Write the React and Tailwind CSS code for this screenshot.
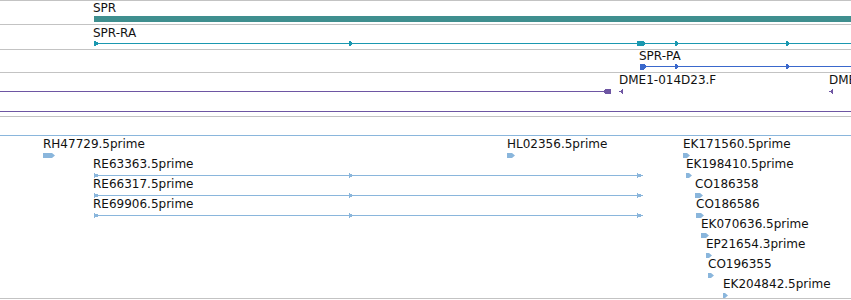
import React from "react";

const TEAL_BAR = "#3f8f8f";
const TEAL = "#1b98b0";
const BLUE = "#3a68cc";
const PURPLE = "#6e56a3";
const EST = "#8ab6dc";

// pointed block from x1 to x2, point on the dir side
function Block({ x1, x2, y = 0, h = 5, dir = "right", color }) {
  const b = y + h;
  const cy = y + h / 2;
  const p = Math.min(3, x2 - x1);
  const pts =
    dir === "right"
      ? `${x1},${y} ${x2 - p},${y} ${x2},${cy} ${x2 - p},${b} ${x1},${b}`
      : `${x2},${y} ${x1 + p},${y} ${x1},${cy} ${x1 + p},${b} ${x2},${b}`;
  return <polygon points={pts} fill={color} />;
}

function Tri({ x, y = 0, h = 6, w = 5, dir = "right", color }) {
  const cy = y + h / 2;
  const pts =
    dir === "right"
      ? `${x},${y} ${x + w},${cy} ${x},${y + h}`
      : `${x + w},${y} ${x},${cy} ${x + w},${y + h}`;
  return <polygon points={pts} fill={color} />;
}

function Line({ x1 = 0, x2 = 851, y, color }) {
  return <rect x={x1} y={y} width={x2 - x1} height={1} fill={color} />;
}

// a name placed at its genomic x on the track canvas
function Name({ x, children }) {
  return (
    <span
      className="absolute top-0 whitespace-nowrap text-[12px] leading-[12px] text-[#111]"
      style={{ left: x }}
    >
      {children}
    </span>
  );
}

const estRows = [
  [
    { name: "RH47729.5prime", x: 43, end: 55 },
    { name: "HL02356.5prime", x: 507, end: 515 },
    { name: "EK171560.5prime", x: 683, end: 690 },
  ],
  [
    { name: "RE63363.5prime", x: 93, long: true },
    { name: "EK198410.5prime", x: 686, end: 692 },
  ],
  [
    { name: "RE66317.5prime", x: 93, long: true },
    { name: "CO186358", x: 695, end: 703 },
  ],
  [
    { name: "RE69906.5prime", x: 93, long: true },
    { name: "CO186586", x: 696, end: 704 },
  ],
  [{ name: "EK070636.5prime", x: 701, end: 709 }],
  [{ name: "EP21654.3prime", x: 706, end: 712 }],
  [{ name: "CO196355", x: 708, end: 714 }],
  [{ name: "EK204842.5prime", x: 723, end: 728 }],
];

function EstFeature({ f }) {
  return (
    <div className="absolute top-0 flex flex-col" style={{ left: f.x }}>
      <span className="whitespace-nowrap text-[12px] leading-[12px] text-[#111]">
        {f.name}
      </span>
      {f.long ? (
        <svg className="ml-px mt-[3px]" width="552" height="6" shapeRendering="crispEdges">
          <Line x1={0} x2={546} y={2} color={EST} />
          <Tri x={0} h={5} w={6} color={EST} />
          <Tri x={255} h={5} color={EST} />
          <Tri x={543} h={5} w={6} color={EST} />
        </svg>
      ) : (
        <svg className="mt-[3px]" width={f.end - f.x} height="5">
          <Block x1={0} x2={f.end - f.x} h={5} color={EST} />
        </svg>
      )}
    </div>
  );
}

export default function App() {
  return (
    <div className="flex h-[300px] w-[851px] flex-col overflow-hidden bg-white font-['DejaVu_Sans',Verdana,sans-serif]">
      {/* gene SPR */}
      <div className="flex h-[25px] shrink-0 flex-col border-y border-[#c3c3c3] pl-[93px] pt-px">
        <span className="text-[12px] leading-[12px] text-[#111]">SPR</span>
        <div className="ml-px mt-[2px] h-[6px] bg-[#3f8f8f]" />
      </div>

      {/* transcript SPR-RA */}
      <div className="flex h-[25px] shrink-0 flex-col border-b border-[#c3c3c3] pt-[2px]">
        <div className="relative h-[12px]">
          <Name x={93}>SPR-RA</Name>
        </div>
        <svg className="mt-px" width="851" height="7" shapeRendering="crispEdges">
          <Line x1={94} y={3} color={TEAL} />
          <Tri x={94} y={0.5} w={6} color={TEAL} />
          <Tri x={349} y={0.5} color={TEAL} />
          <Block x1={637} x2={646} y={1} h={5} color={TEAL} />
          <Tri x={675} y={0.5} color={TEAL} />
          <Tri x={786} y={0.5} color={TEAL} />
        </svg>
      </div>

      {/* protein SPR-PA */}
      <div className="flex h-[23px] shrink-0 flex-col border-b border-[#c3c3c3]">
        <div className="relative h-[12px]">
          <Name x={639}>SPR-PA</Name>
        </div>
        <svg className="mt-px" width="851" height="7" shapeRendering="crispEdges">
          <Line x1={640} y={3} color={BLUE} />
          <Block x1={640} x2={647} y={0.5} h={6} color={BLUE} />
          <Tri x={675} y={0.5} color={BLUE} />
          <Tri x={786} y={0.5} color={BLUE} />
        </svg>
      </div>

      {/* clone ends */}
      <div className="flex h-[44px] shrink-0 flex-col border-b border-[#c3c3c3] pt-px">
        <div className="relative h-[12px]">
          <Name x={619}>DME1-014D23.F</Name>
          <Name x={829}>DME1-014D23.R</Name>
        </div>
        <svg className="mt-[2px]" width="851" height="7" shapeRendering="crispEdges">
          <Line x1={0} x2={604} y={3} color={PURPLE} />
          <Block x1={603} x2={611} y={1} h={5} dir="left" color={PURPLE} />
          <Tri x={619} y={1} h={5} w={4} dir="left" color={PURPLE} />
          <Tri x={829} y={1} h={5} w={4} dir="left" color={PURPLE} />
        </svg>
        <div className="mt-[16px] h-px bg-[#6e56a3]" />
      </div>

      {/* ESTs */}
      <div className="flex h-[182px] shrink-0 flex-col border-b border-[#c3c3c3]">
        <div className="mt-[18px] h-px bg-[#8ab6dc]" />
        <div className="mt-[2px] flex flex-col">
          {estRows.map((row, i) => (
            <div key={i} className="relative h-[20px]">
              {row.map((f) => (
                <EstFeature key={f.name} f={f} />
              ))}
            </div>
          ))}
        </div>
      </div>
    </div>
  );
}
